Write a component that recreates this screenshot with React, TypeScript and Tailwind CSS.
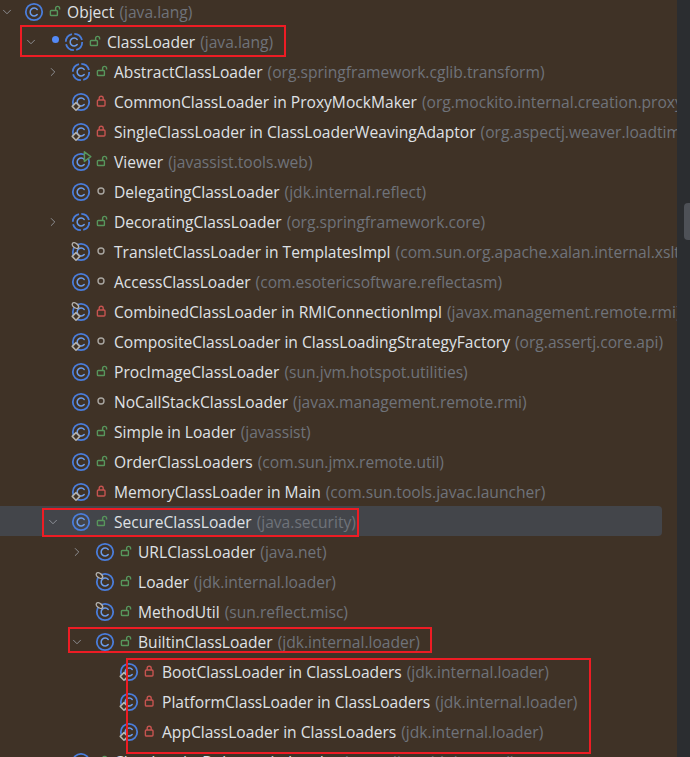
import React from 'react';
import { ChevronDown, ChevronRight } from 'lucide-react';

type Access = 'public' | 'private' | 'package';
type Badge = 'none' | 'inner' | 'pin' | 'pinInner' | 'run';

type Item = {
  name: string;
  pkg: string;
  pad: string;
  slot?: string;
  access: Access;
  badge?: Badge;
  abstract?: boolean;
  open?: boolean;
  closed?: boolean;
  dot?: boolean;
  selected?: boolean;
};

const d2 = 'pl-[46px]';
const d3 = 'pl-[70px]';
const d4 = 'pl-[94px]';

const items: Item[] = [
  { name: 'Object', pkg: '(java.lang)', pad: 'pl-0', slot: 'w-[9px]', access: 'public', open: true },
  { name: 'ClassLoader', pkg: '(java.lang)', pad: 'pl-[24px]', slot: 'w-[25px] pl-[10px]', access: 'public', open: true, dot: true, abstract: true },
  { name: 'AbstractClassLoader', pkg: '(org.springframework.cglib.transform)', pad: d2, access: 'public', closed: true, abstract: true },
  { name: 'CommonClassLoader in ProxyMockMaker', pkg: '(org.mockito.internal.creation.proxy)', pad: d2, access: 'private', badge: 'inner' },
  { name: 'SingleClassLoader in ClassLoaderWeavingAdaptor', pkg: '(org.aspectj.weaver.loadtime)', pad: d2, access: 'private', badge: 'inner' },
  { name: 'Viewer', pkg: '(javassist.tools.web)', pad: d2, access: 'public', badge: 'run' },
  { name: 'DelegatingClassLoader', pkg: '(jdk.internal.reflect)', pad: d2, access: 'package' },
  { name: 'DecoratingClassLoader', pkg: '(org.springframework.core)', pad: d2, access: 'public', closed: true, abstract: true },
  { name: 'TransletClassLoader in TemplatesImpl', pkg: '(com.sun.org.apache.xalan.internal.xsltc)', pad: d2, access: 'package', badge: 'pinInner' },
  { name: 'AccessClassLoader', pkg: '(com.esotericsoftware.reflectasm)', pad: d2, access: 'package' },
  { name: 'CombinedClassLoader in RMIConnectionImpl', pkg: '(javax.management.remote.rmi)', pad: d2, access: 'private', badge: 'pinInner' },
  { name: 'CompositeClassLoader in ClassLoadingStrategyFactory', pkg: '(org.assertj.core.api)', pad: d2, access: 'package', badge: 'inner' },
  { name: 'ProcImageClassLoader', pkg: '(sun.jvm.hotspot.utilities)', pad: d2, access: 'public' },
  { name: 'NoCallStackClassLoader', pkg: '(javax.management.remote.rmi)', pad: d2, access: 'package' },
  { name: 'Simple in Loader', pkg: '(javassist)', pad: d2, access: 'public', badge: 'inner' },
  { name: 'OrderClassLoaders', pkg: '(com.sun.jmx.remote.util)', pad: d2, access: 'public' },
  { name: 'MemoryClassLoader in Main', pkg: '(com.sun.tools.javac.launcher)', pad: d2, access: 'private', badge: 'inner' },
  { name: 'SecureClassLoader', pkg: '(java.security)', pad: d2, access: 'public', open: true, selected: true },
  { name: 'URLClassLoader', pkg: '(java.net)', pad: d3, access: 'public', closed: true },
  { name: 'Loader', pkg: '(jdk.internal.loader)', pad: d3, access: 'public', badge: 'pin' },
  { name: 'MethodUtil', pkg: '(sun.reflect.misc)', pad: d3, access: 'public', badge: 'pin' },
  { name: 'BuiltinClassLoader', pkg: '(jdk.internal.loader)', pad: d3, access: 'public', open: true },
  { name: 'BootClassLoader in ClassLoaders', pkg: '(jdk.internal.loader)', pad: d4, access: 'private', badge: 'inner' },
  { name: 'PlatformClassLoader in ClassLoaders', pkg: '(jdk.internal.loader)', pad: d4, access: 'private', badge: 'inner' },
  { name: 'AppClassLoader in ClassLoaders', pkg: '(jdk.internal.loader)', pad: d4, access: 'private', badge: 'inner' },
  { name: 'ClassLoaderDelegate in Loader', pkg: '(org.eclipse.jdt.internal)', pad: d2, access: 'public' },
];

function ClassIcon({ abstract, badge = 'none' }: { abstract?: boolean; badge?: Badge }) {
  const inner = badge === 'inner' || badge === 'pinInner';
  const pin = badge === 'pin' || badge === 'pinInner';
  return (
    <svg width="22" height="22" viewBox="0 0 22 22" fill="none" className="relative shrink-0 overflow-visible">
      <circle cx="11" cy="11" r="8.2" stroke="#4a7ddb" strokeWidth="1.8" strokeDasharray={abstract ? '10.5 2.4' : undefined} />
      <path d="M14.2 8.4a4 4 0 1 0 0 5.2" stroke="#6a9bea" strokeWidth="1.5" strokeLinecap="round" />
      {inner && <path d="M6 11.6l3.8 3.8L6 19.2l-3.8-3.8z" fill="#3f3226" stroke="#b4b2ae" strokeWidth="1.5" strokeLinejoin="round" />}
      {pin && (
        <ellipse cx="5.4" cy="4.6" rx="3.7" ry="2.2" transform="rotate(38 5.4 4.6)" fill="#3f3226" stroke="#b4b2ae" strokeWidth="1.3" />
      )}
      {badge === 'run' && <path d="M14.4 0.8l6.4 4.8-6.4 4.8z" fill="#3f3226" stroke="#57965c" strokeWidth="1.5" strokeLinejoin="round" />}
    </svg>
  );
}

function AccessIcon({ access }: { access: Access }) {
  if (access === 'package') {
    return (
      <svg width="16" height="16" viewBox="0 0 16 16" fill="none" className="shrink-0 -translate-y-px">
        <circle cx="7" cy="8" r="3" stroke="#a8a5a0" strokeWidth="1.4" />
      </svg>
    );
  }
  if (access === 'private') {
    return (
      <svg width="16" height="16" viewBox="0 0 16 16" fill="none" className="shrink-0 -translate-y-px">
        <rect x="3.4" y="7" width="7.6" height="6" rx="1" stroke="#c75450" strokeWidth="1.4" />
        <path d="M5.2 7V5.2a2 2 0 0 1 4 0V7" stroke="#c75450" strokeWidth="1.4" />
      </svg>
    );
  }
  return (
    <svg width="16" height="16" viewBox="0 0 16 16" fill="none" className="shrink-0 -translate-y-px">
      <rect x="3.4" y="7.5" width="7" height="5" rx="0.8" stroke="#57965c" strokeWidth="1.4" />
      <path d="M8.6 7.5V5.4a2 2 0 0 1 4 0V6.6" stroke="#57965c" strokeWidth="1.4" />
    </svg>
  );
}

function Row({ item }: { item: Item }) {
  return (
    <div className={`relative flex h-[30px] shrink-0 items-center whitespace-nowrap ${item.pad}`}>
      {item.selected && <div className="absolute -top-px bottom-px left-0 right-[15px] rounded-r bg-[#43454a]" />}
      <div className="relative flex w-[14px] shrink-0 justify-center text-[#9da0a8]">
        {item.open && <ChevronDown size={18} strokeWidth={1.4} />}
        {item.closed && <ChevronRight size={18} strokeWidth={1.4} />}
      </div>
      <div className={`relative flex shrink-0 justify-center ${item.slot ?? 'w-[10px]'}`}>
        {item.dot && <div className="h-[7px] w-[7px] shrink-0 -translate-y-[3px] rounded-full bg-[#548af7]" />}
      </div>
      <ClassIcon abstract={item.abstract} badge={item.badge} />
      <div className="relative ml-[2px] mr-[4px] flex">
        <AccessIcon access={item.access} />
      </div>
      <span className="relative translate-y-px text-[15.6px] text-[#dfe1e5]">{item.name}</span>
      <span className="relative ml-[5px] translate-y-px text-[15.6px] text-[#6f737a]">{item.pkg}</span>
    </div>
  );
}

export default function App() {
  return (
    <div className="relative flex h-screen w-full overflow-hidden bg-[#2b2d30] font-['Open_Sans','Liberation_Sans',sans-serif]">
      <div className="flex w-[677px] min-w-0 shrink-0 flex-col overflow-hidden bg-[#3f3226]">
        <div className="-mt-[3px] flex flex-col">
          {items.map((item) => (
            <Row key={item.name} item={item} />
          ))}
        </div>
      </div>
      <div className="absolute right-0 top-[203px] h-[37px] w-[6px] rounded-l bg-[#4e5157]" />
      <div className="pointer-events-none absolute left-[20px] top-[25px] h-[32px] w-[266px] border-2 border-[#ed1c24]" />
      <div className="pointer-events-none absolute left-[42px] top-[508px] h-[29px] w-[317px] border-2 border-[#ed1c24]" />
      <div className="pointer-events-none absolute left-[68px] top-[627px] h-[26px] w-[364px] border-2 border-[#ed1c24]" />
      <div className="pointer-events-none absolute left-[126px] top-[658px] h-[96px] w-[465px] border-2 border-[#ed1c24]" />
    </div>
  );
}
